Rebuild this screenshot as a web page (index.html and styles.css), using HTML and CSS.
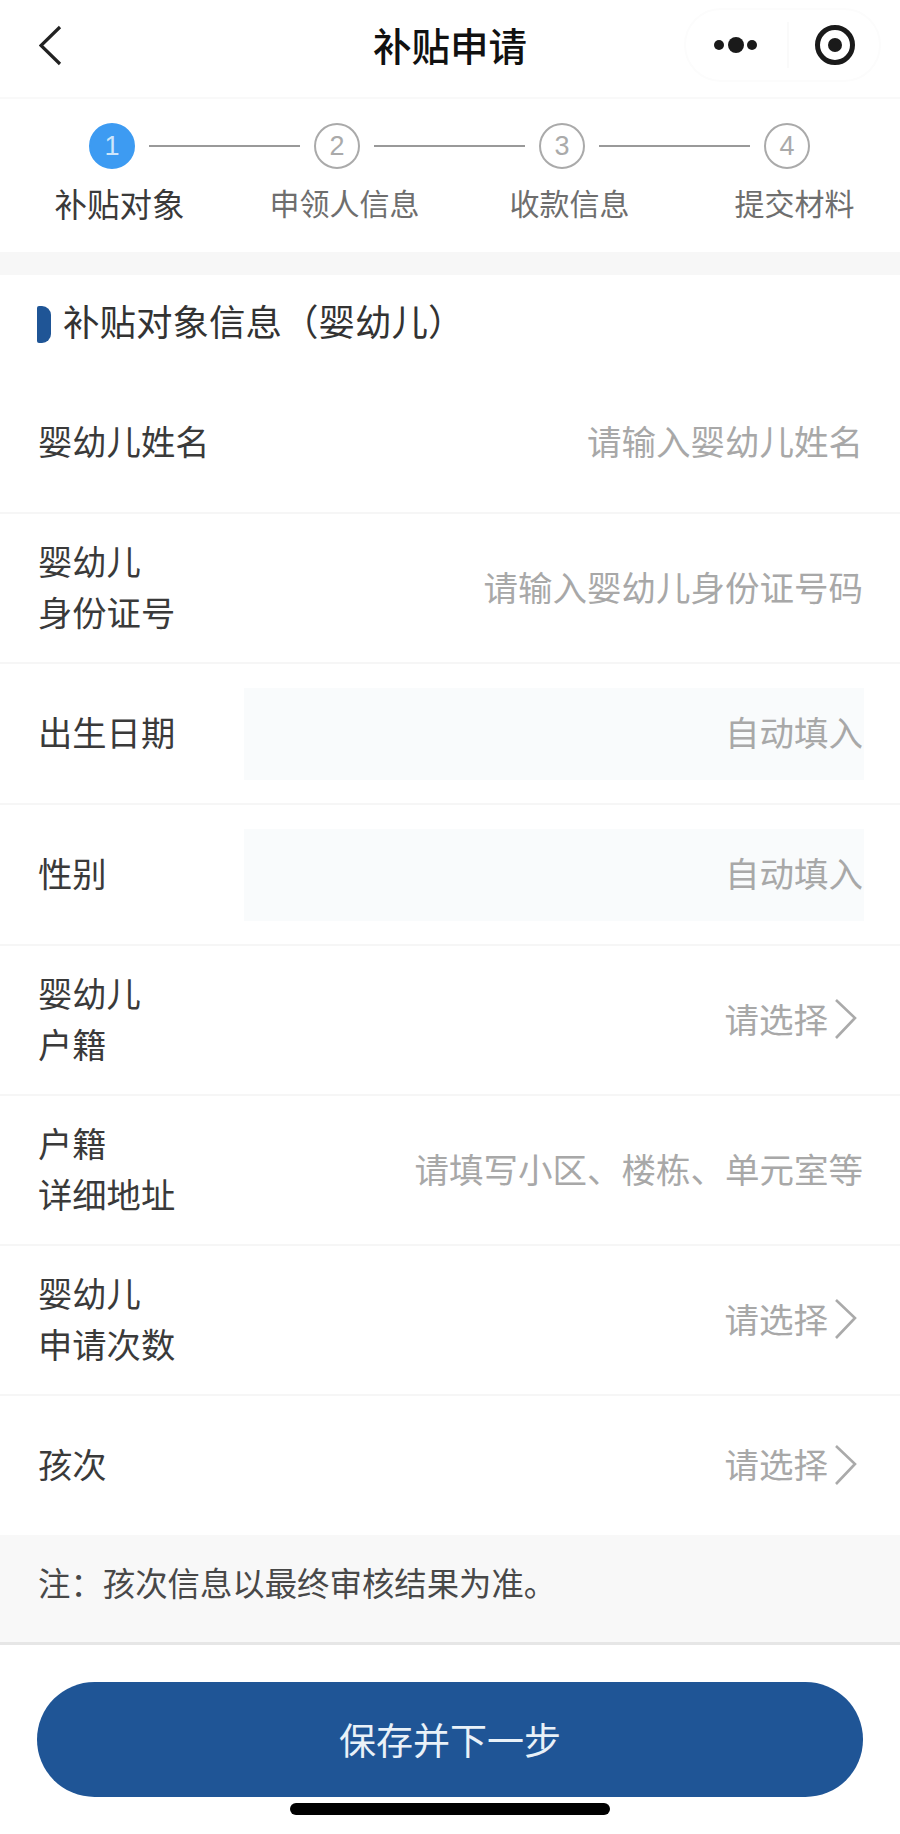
FILE: index.html
```html
<!DOCTYPE html>
<html lang="zh-CN">
<head>
<meta charset="utf-8">
<title>补贴申请</title>
<link rel="stylesheet" href="styles.css">
</head>
<body>
<div class="page">
  <header class="nav">
    <svg class="nav-back" width="24" height="42" viewBox="0 0 24 42"><path d="M21 2 L2 20.5 L21 39" fill="none" stroke="#222" stroke-width="3.2"/></svg>
    <h1 class="nav-title">补贴申请</h1>
    <div class="capsule">
      <svg class="capsule-dots" width="48" height="20" viewBox="0 0 48 20"><circle cx="7" cy="10" r="5" fill="#1a1a1a"/><circle cx="24" cy="10" r="8" fill="#1a1a1a"/><circle cx="40" cy="10" r="5" fill="#1a1a1a"/></svg>
      <span class="capsule-sep"></span>
      <svg class="capsule-target" width="42" height="42" viewBox="0 0 42 42"><circle cx="21" cy="21" r="17.5" fill="none" stroke="#1a1a1a" stroke-width="5"/><circle cx="21" cy="21" r="7" fill="#1a1a1a"/></svg>
    </div>
  </header>

  <section class="steps">
    <div class="step-track">
      <span class="step-dot step-dot-active">1</span><span class="step-line"></span>
      <span class="step-dot">2</span><span class="step-line"></span>
      <span class="step-dot">3</span><span class="step-line"></span>
      <span class="step-dot">4</span>
    </div>
    <div class="step-labels">
      <span class="step-label step-label-active">补贴对象</span>
      <span class="step-label">申领人信息</span>
      <span class="step-label">收款信息</span>
      <span class="step-label">提交材料</span>
    </div>
  </section>

  <div class="band"></div>

  <h2 class="section-title"><span class="section-mark"></span>补贴对象信息（婴幼儿）</h2>

  <div class="row"><span class="label">婴幼儿姓名</span><span class="hint">请输入婴幼儿姓名</span></div>
  <div class="row row-tall"><span class="label">婴幼儿<br>身份证号</span><span class="hint">请输入婴幼儿身份证号码</span></div>
  <div class="row"><span class="label">出生日期</span><span class="field"><span class="hint">自动填入</span></span></div>
  <div class="row"><span class="label">性别</span><span class="field"><span class="hint">自动填入</span></span></div>
  <div class="row row-tall"><span class="label">婴幼儿<br>户籍</span><span class="select"><span class="hint">请选择</span><svg class="arrow" width="24" height="42" viewBox="0 0 24 42"><path d="M2 2 L21 20 L2 40" fill="none" stroke="#aaa" stroke-width="2.6"/></svg></span></div>
  <div class="row row-tall"><span class="label">户籍<br>详细地址</span><span class="hint">请填写小区、楼栋、单元室等</span></div>
  <div class="row row-tall"><span class="label">婴幼儿<br>申请次数</span><span class="select"><span class="hint">请选择</span><svg class="arrow" width="24" height="42" viewBox="0 0 24 42"><path d="M2 2 L21 20 L2 40" fill="none" stroke="#aaa" stroke-width="2.6"/></svg></span></div>
  <div class="row row-last"><span class="label">孩次</span><span class="select"><span class="hint">请选择</span><svg class="arrow" width="24" height="42" viewBox="0 0 24 42"><path d="M2 2 L21 20 L2 40" fill="none" stroke="#aaa" stroke-width="2.6"/></svg></span></div>

  <p class="note">注：孩次信息以最终审核结果为准。</p>

  <footer class="footer">
    <button class="primary" type="button">保存并下一步</button>
    <span class="home-bar"></span>
  </footer>
</div>
</body>
</html>
```

FILE: styles.css
```css
* {
  box-sizing: border-box;
}

html,
body {
  margin: 0;
  padding: 0;
  background: #fff;
}

body {
  font-family: "Noto Sans CJK SC", "Noto Sans", sans-serif;
  color: #3a3a3a;
}

.page {
  width: 900px;
  height: 1834px;
  overflow: hidden;
  display: flex;
  flex-direction: column;
}

/* Navigation bar */
.nav {
  position: relative;
  height: 99px;
  flex: none;
  display: flex;
  align-items: center;
  justify-content: center;
  border-bottom: 2px solid #f9f9f9;
}

.nav-back {
  position: absolute;
  left: 39px;
  top: 25px;
}

.nav-title {
  margin: 0 0 10px;
  font-size: 38.5px;
  line-height: 50px;
  font-weight: 500;
  color: #111;
}

.capsule {
  position: absolute;
  left: 684px;
  top: 8px;
  width: 197px;
  height: 74px;
  border: 2px solid #fcfcfc;
  border-radius: 37px;
  display: flex;
  align-items: center;
}

.capsule-dots {
  margin-left: 26px;
  margin-bottom: 1px;
}

.capsule-sep {
  width: 2px;
  height: 46px;
  margin-left: 27px;
  background: #fafafa;
}

.capsule-target {
  margin-left: 25px;
}

/* Steps */
.steps {
  height: 153px;
  flex: none;
  padding-top: 24px;
}

.step-track {
  display: flex;
  align-items: center;
  gap: 14px;
  padding-left: 89px;
}

.step-dot {
  width: 46px;
  height: 46px;
  flex: none;
  border: 2px solid #aaa;
  border-radius: 50%;
  display: flex;
  align-items: center;
  justify-content: center;
  font-family: "Liberation Sans", sans-serif;
  font-size: 27px;
  color: #aaa;
}

.step-dot-active {
  border-color: #3d9bf2;
  background: #3d9bf2;
  color: #cfe6fb;
}

.step-line {
  width: 151px;
  height: 2px;
  flex: none;
  background: #999;
}

.step-labels {
  display: grid;
  grid-template-columns: repeat(4, 225px);
  margin-top: 10px;
}

.step-label {
  padding: 1px 0 0 14px;
  text-align: center;
  font-size: 30px;
  line-height: 44px;
  white-space: nowrap;
  color: #6e6e6e;
}

.step-label-active {
  padding-top: 0;
  font-size: 32.5px;
  line-height: 48px;
  color: #3a3a3a;
}

.band {
  height: 23px;
  flex: none;
  background: #f7f7f7;
}

/* Section title */
.section-title {
  height: 98px;
  flex: none;
  margin: 0;
  display: flex;
  align-items: center;
  padding: 0 0 7px 37px;
  font-size: 36.5px;
  font-weight: 400;
  color: #333;
}

.section-mark {
  width: 14px;
  height: 37px;
  margin: 7px 12px 0 0;
  background: #1f5596;
  border-radius: 2px 9px 9px 2px;
}

/* Form rows */
.row {
  height: 141px;
  flex: none;
  display: flex;
  align-items: center;
  justify-content: space-between;
  padding: 0 37px 0 38px;
  border-bottom: 2px solid #f6f6f6;
}

.row-tall {
  height: 150px;
}

.row-last {
  height: 139px;
  border-bottom: 0;
}

.label {
  padding-bottom: 4px;
  font-size: 34.3px;
  line-height: 51px;
  color: #3a3a3a;
}

.hint {
  padding-bottom: 4px;
  font-size: 34.5px;
  line-height: 51px;
  white-space: nowrap;
  color: #a8a8a8;
}

.field {
  width: 620px;
  height: 92px;
  margin-right: -1px;
  padding-right: 1px;
  display: flex;
  align-items: center;
  justify-content: flex-end;
  background: #f9fbfc;
}

.select {
  display: flex;
  align-items: center;
  gap: 6px;
  margin-right: 5px;
}

.arrow {
  margin-bottom: 2px;
}

.note {
  height: 110px;
  flex: none;
  margin: 0;
  padding: 0 0 15px 38px;
  display: flex;
  align-items: center;
  font-size: 32.4px;
  color: #484848;
  background: #f8f8f8;
  border-bottom: 3px solid #e6e6e6;
}

/* Footer */
.footer {
  flex: 1;
  display: flex;
  flex-direction: column;
  align-items: center;
  padding-top: 37px;
}

.primary {
  width: 826px;
  height: 115px;
  flex: none;
  padding: 0 0 2px;
  border: 0;
  border-radius: 58px;
  background: #1f5596;
  color: #e9f1f8;
  font-family: inherit;
  font-size: 37px;
  font-weight: 400;
}

.home-bar {
  width: 320px;
  height: 12px;
  margin-top: 6px;
  flex: none;
  border-radius: 6px;
  background: #000;
}
```
